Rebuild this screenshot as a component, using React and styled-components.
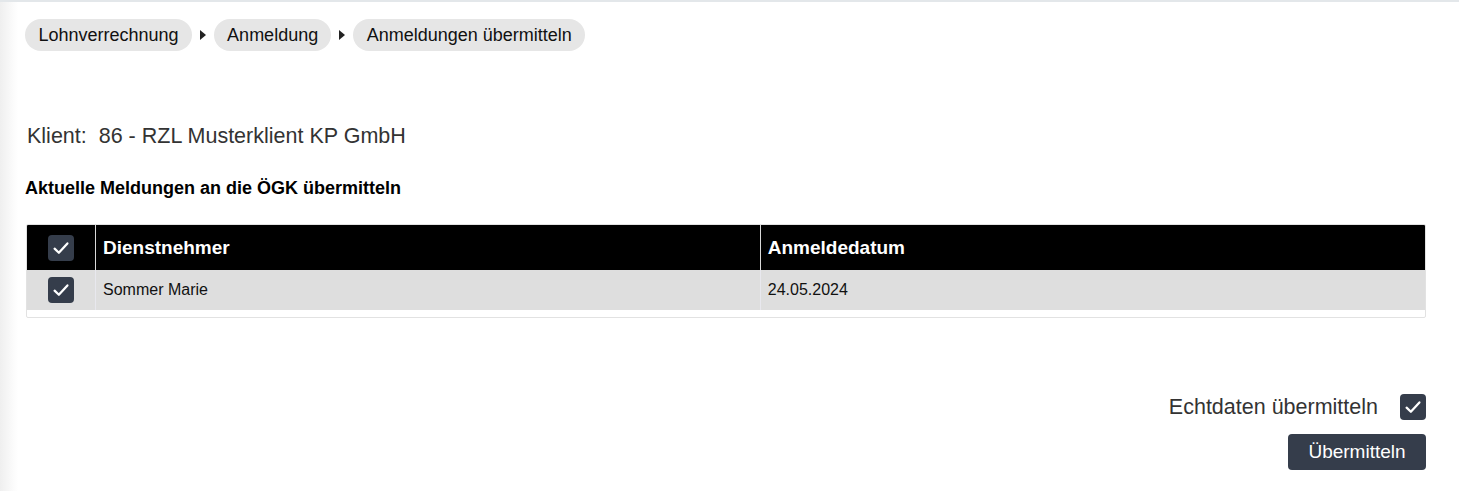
import styled, { createGlobalStyle } from "styled-components";

const GlobalStyle = createGlobalStyle`
  html, body {
    margin: 0;
    padding: 0;
    background: #fff;
    font-family: "Liberation Sans", Arial, sans-serif;
  }
`;

const Page = styled.div`
  min-height: 491px;
  box-sizing: border-box;
  border-top: 2px solid #e3e7ea;
  background: linear-gradient(to right, #efefef 0px, #fafafa 12px, #fff 18px);
  padding: 17px 33px 20px 25px;
  display: flex;
  flex-direction: column;
`;

const Breadcrumbs = styled.nav`
  display: flex;
  align-items: center;
  gap: 8px;
`;

const Crumb = styled.span`
  display: inline-flex;
  align-items: center;
  height: 32px;
  padding: 0 13px 0 13.5px;
  border-radius: 16px;
  background: #e6e6e6;
  color: #111;
  font-size: 18px;
`;

const Arrow = styled.span`
  width: 0;
  height: 0;
  border-top: 5px solid transparent;
  border-bottom: 5px solid transparent;
  border-left: 6px solid #222;
`;

const Client = styled.div`
  margin-top: 73px;
  margin-left: 2px;
  font-size: 21.5px;
  color: #333;
  white-space: pre;
`;

const Heading = styled.h2`
  margin: 29px 0 0;
  font-size: 18px;
  font-weight: bold;
  color: #000;
`;

const TableWrap = styled.div`
  margin-top: 25px;
  margin-left: 1px;
  border: 1px solid #e2e2e2;
  border-radius: 2px;
  padding-bottom: 7px;
  overflow: hidden;
`;

const Table = styled.table`
  width: 100%;
  border-collapse: collapse;
  table-layout: fixed;
`;

const HeadCell = styled.th`
  height: 45px;
  background: #000;
  color: #fff;
  font-size: 19px;
  font-weight: bold;
  text-align: left;
  padding: 0 8px 0 7px;
  border-left: 1px solid ${(p) => (p.$first ? "#000" : "#d8d8d8")};
`;

const Cell = styled.td`
  height: 40px;
  background: #dedede;
  color: #111;
  font-size: 16px;
  padding: 0 8px 0 7px;
  border-left: 1px solid ${(p) => (p.$first ? "#dedede" : "#e8e8ee")};
`;

const CheckCell = styled.div`
  display: flex;
  justify-content: center;
`;

const Box = styled.span`
  width: 26px;
  height: 26px;
  border-radius: 4px;
  background: #353d4b;
  display: inline-flex;
  align-items: center;
  justify-content: center;
  flex-shrink: 0;
`;

const Footer = styled.div`
  margin-top: 76px;
  display: flex;
  flex-direction: column;
  align-items: flex-end;
  gap: 14px;
`;

const RealData = styled.label`
  display: flex;
  align-items: center;
  gap: 22px;
  font-size: 21.5px;
  color: #333;
`;

const Button = styled.button`
  height: 36px;
  width: 138px;
  border: none;
  border-radius: 4px;
  background: #353d4b;
  color: #fff;
  font-family: "Liberation Sans", Arial, sans-serif;
  font-size: 19px;
`;

function Check() {
  return (
    <Box>
      <svg width="18" height="18" viewBox="0 0 16 16">
        <path
          d="M2.3 8.6 L6.1 12.2 L13.7 3.9"
          fill="none"
          stroke="#fff"
          strokeWidth="2"
          strokeLinecap="round"
          strokeLinejoin="round"
        />
      </svg>
    </Box>
  );
}

const rows = [{ name: "Sommer Marie", date: "24.05.2024" }];

export default function App() {
  return (
    <>
      <GlobalStyle />
      <Page>
        <Breadcrumbs>
          <Crumb>Lohnverrechnung</Crumb>
          <Arrow />
          <Crumb>Anmeldung</Crumb>
          <Arrow />
          <Crumb>Anmeldungen übermitteln</Crumb>
        </Breadcrumbs>

        <Client>Klient:  86 - RZL Musterklient KP GmbH</Client>

        <Heading>Aktuelle Meldungen an die ÖGK übermitteln</Heading>

        <TableWrap>
          <Table>
            <colgroup>
              <col style={{ width: "68px" }} />
              <col />
              <col />
            </colgroup>
            <thead>
              <tr>
                <HeadCell $first>
                  <CheckCell>
                    <Check />
                  </CheckCell>
                </HeadCell>
                <HeadCell>Dienstnehmer</HeadCell>
                <HeadCell>Anmeldedatum</HeadCell>
              </tr>
            </thead>
            <tbody>
              {rows.map((r) => (
                <tr key={r.name}>
                  <Cell $first>
                    <CheckCell>
                      <Check />
                    </CheckCell>
                  </Cell>
                  <Cell>{r.name}</Cell>
                  <Cell>{r.date}</Cell>
                </tr>
              ))}
            </tbody>
          </Table>
        </TableWrap>

        <Footer>
          <RealData>
            Echtdaten übermitteln
            <Check />
          </RealData>
          <Button>Übermitteln</Button>
        </Footer>
      </Page>
    </>
  );
}
